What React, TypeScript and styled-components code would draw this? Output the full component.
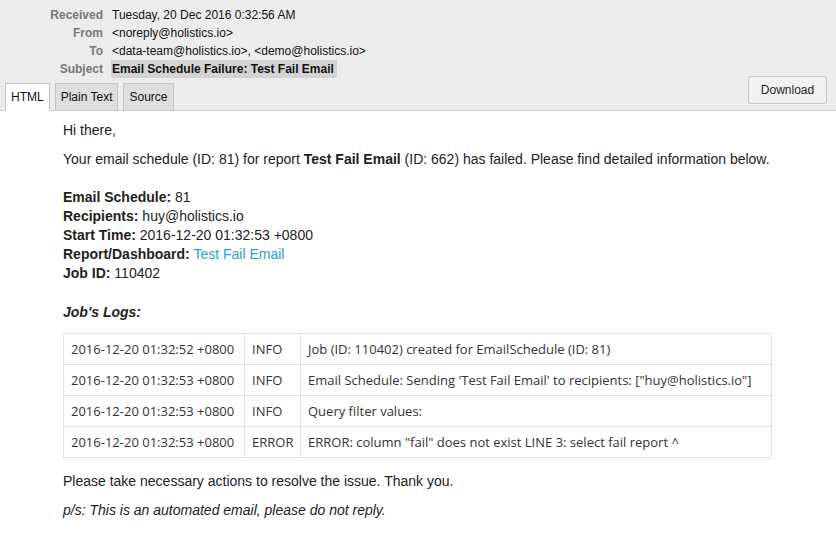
import React from "react";
import styled, { createGlobalStyle } from "styled-components";

const Global = createGlobalStyle`
  html, body { margin: 0; padding: 0; background: #fff; }
  body { font-family: "Liberation Sans", Arial, sans-serif; color: #222; }
`;

const Page = styled.div`
  width: 836px;
  min-height: 551px;
  background: #fff;
`;

const Header = styled.div`
  background: #ececec;
  border-bottom: 1px solid #cfcfcf;
  display: flex;
  justify-content: space-between;
  align-items: flex-end;
  padding: 6px 9px 0 5px;
`;

const HeaderLeft = styled.div`
  display: flex;
  flex-direction: column;
`;

const Fields = styled.div`
  display: grid;
  grid-template-columns: 98px auto;
  column-gap: 9px;
  font-size: 12px;
  line-height: 18px;
  margin-bottom: 5px;
`;

const Label = styled.div`
  text-align: right;
  font-weight: bold;
  color: #777;
`;

const Value = styled.div<{ $highlight?: boolean }>`
  color: #111;
  justify-self: start;
  ${(p) =>
    p.$highlight &&
    `
    font-weight: bold;
    background: #d3d3d3;
    padding-right: 3px;
    margin-left: -1px;
    padding-left: 1px;
  `}
`;

const Tabs = styled.div`
  display: flex;
  gap: 5px;
  margin-bottom: -1px;
`;

const Tab = styled.div<{ $active?: boolean }>`
  font-size: 12px;
  height: 26px;
  line-height: 26px;
  padding: 0 5px;
  border: 1px solid #c6c6c6;
  border-bottom: ${(p) => (p.$active ? "1px solid #fff" : "1px solid #cfcfcf")};
  background: ${(p) => (p.$active ? "#fff" : "#dedede")};
  color: #111;
`;

const DownloadButton = styled.button`
  font-family: "Liberation Sans", Arial, sans-serif;
  font-size: 12px;
  color: #222;
  background: #f1f1f1;
  border: 1px solid #c6c6c6;
  border-radius: 3px;
  width: 79px;
  height: 28px;
  margin-bottom: 6px;
  padding: 0;
`;

const Body = styled.div`
  padding: 10px 0 0 63px;
  font-size: 14px;
  line-height: 19px;
`;

const P = styled.p<{ $mt?: number }>`
  margin: ${(p) => p.$mt ?? 10}px 0 0 0;
`;

const Link = styled.a`
  color: #2a9fd6;
  text-decoration: none;
`;

const LogTitle = styled.p`
  margin: 20px 0 0 0;
  font-weight: bold;
  font-style: italic;
`;

const Table = styled.table`
  margin-top: 11px;
  border-collapse: collapse;
  width: 709px;
  font-family: "Open Sans", sans-serif;
  font-size: 13px;
  color: #333;
`;

const Td = styled.td<{ $w?: number }>`
  border: 1px solid #e2e2e2;
  padding: 6px 6px 6px 7px;
  line-height: 18px;
  white-space: nowrap;
  ${(p) => (p.$w ? `width: ${p.$w}px;` : "")}
`;

const Italic = styled.p`
  margin: 10px 0 0 0;
  font-style: italic;
`;

const logs = [
  ["2016-12-20 01:32:52 +0800", "INFO", "Job (ID: 110402) created for EmailSchedule (ID: 81)"],
  ["2016-12-20 01:32:53 +0800", "INFO", "Email Schedule: Sending 'Test Fail Email' to recipients: [\"huy@holistics.io\"]"],
  ["2016-12-20 01:32:53 +0800", "INFO", "Query filter values:"],
  ["2016-12-20 01:32:53 +0800", "ERROR", "ERROR: column \"fail\" does not exist LINE 3: select fail report ^"],
];

export default function App() {
  return (
    <Page>
      <Global />
      <Header>
        <HeaderLeft>
          <Fields>
            <Label>Received</Label>
            <Value>Tuesday, 20 Dec 2016 0:32:56 AM</Value>
            <Label>From</Label>
            <Value>&lt;noreply@holistics.io&gt;</Value>
            <Label>To</Label>
            <Value>&lt;data-team@holistics.io&gt;, &lt;demo@holistics.io&gt;</Value>
            <Label>Subject</Label>
            <Value $highlight>Email Schedule Failure: Test Fail Email</Value>
          </Fields>
          <Tabs>
            <Tab $active>HTML</Tab>
            <Tab>Plain Text</Tab>
            <Tab>Source</Tab>
          </Tabs>
        </HeaderLeft>
        <DownloadButton>Download</DownloadButton>
      </Header>
      <Body>
        <P $mt={0}>Hi there,</P>
        <P>
          Your email schedule (ID: 81) for report <b>Test Fail Email</b> (ID: 662) has failed. Please find detailed
          information below.
        </P>
        <P $mt={19}>
          <b>Email Schedule:</b> 81
          <br />
          <b>Recipients:</b> huy@holistics.io
          <br />
          <b>Start Time:</b> 2016-12-20 01:32:53 +0800
          <br />
          <b>Report/Dashboard:</b> <Link href="#">Test Fail Email</Link>
          <br />
          <b>Job ID:</b> 110402
        </P>
        <LogTitle>Job's Logs:</LogTitle>
        <Table>
          <tbody>
            {logs.map((r, i) => (
              <tr key={i}>
                <Td $w={167}>{r[0]}</Td>
                <Td $w={42}>{r[1]}</Td>
                <Td>{r[2]}</Td>
              </tr>
            ))}
          </tbody>
        </Table>
        <P $mt={14}>Please take necessary actions to resolve the issue. Thank you.</P>
        <Italic>p/s: This is an automated email, please do not reply.</Italic>
      </Body>
    </Page>
  );
}
